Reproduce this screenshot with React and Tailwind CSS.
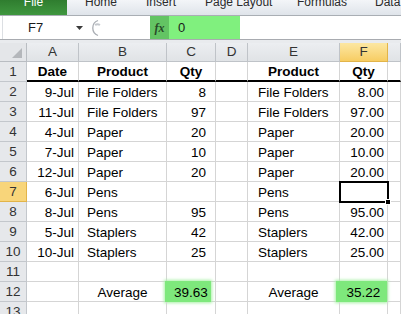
import React from 'react';

const COLS = ['A', 'B', 'C', 'D', 'E', 'F', ''];

// cell alignment per column
const ALIGN = [
    'justify-end pr-[4px]',
    'justify-start pl-[8px]',
    'justify-end pr-[9px]',
    'justify-start',
    'justify-start pl-[10px]',
    'justify-end pr-[3px]',
    'justify-start',
];

const ROWS = [
    ['Date', 'Product', 'Qty', '', 'Product', 'Qty', ''],
    ['9-Jul', 'File Folders', '8', '', 'File Folders', '8.00', ''],
    ['11-Jul', 'File Folders', '97', '', 'File Folders', '97.00', ''],
    ['4-Jul', 'Paper', '20', '', 'Paper', '20.00', ''],
    ['7-Jul', 'Paper', '10', '', 'Paper', '10.00', ''],
    ['12-Jul', 'Paper', '20', '', 'Paper', '20.00', ''],
    ['6-Jul', 'Pens', '', '', 'Pens', '', ''],
    ['8-Jul', 'Pens', '95', '', 'Pens', '95.00', ''],
    ['5-Jul', 'Staplers', '42', '', 'Staplers', '42.00', ''],
    ['10-Jul', 'Staplers', '25', '', 'Staplers', '25.00', ''],
    ['', '', '', '', '', '', ''],
    ['', 'Average', '39.63', '', 'Average', '35.22', ''],
    ['', '', '', '', '', '', ''],
];

function Ribbon() {
    return (
        <div className="h-[16px] flex bg-gradient-to-b from-[#f3f5f8] to-[#dfe4ea] border-b border-[#a9aeb4] overflow-hidden text-[12px] text-[#2b2b2b]">
            <div className="w-[67px] h-full bg-gradient-to-b from-[#2f7d2f] to-[#3f973f] text-white flex justify-center">
                <span className="-mt-[5px] leading-[14px]">File</span>
            </div>
            <div className="w-[18px]" />
            <div className="w-[61px] -mt-[5px] leading-[14px]">Home</div>
            <div className="w-[59px] -mt-[5px] leading-[14px]">Insert</div>
            <div className="w-[92px] -mt-[5px] leading-[14px]">Page Layout</div>
            <div className="w-[78px] -mt-[5px] leading-[14px]">Formulas</div>
            <div className="-mt-[5px] leading-[14px]">Data</div>
        </div>
    );
}

function FormulaBar() {
    return (
        <div className="h-[24px] flex bg-white border-b border-[#a8abb0]">
            <div className="w-[84px] flex items-center border-l border-[#dcdfe3] ml-[2px]">
                <span className="ml-[25px] text-[13px] text-[#1a1a1a]">F7</span>
                <svg width="7" height="4" viewBox="0 0 7 4" className="ml-[33px]">
                    <polygon points="0,0 7,0 3.5,4" fill="#3a3a3a" />
                </svg>
            </div>
            <div className="w-[64px] flex items-center">
                <svg width="16" height="18" viewBox="0 0 16 18">
                    <path d="M12 1.5 A 8 8 0 0 0 12 16.5" fill="none" stroke="#a9adb3" strokeWidth="1.3" />
                    <path d="M9 6 A 4 3 0 0 1 14 6" fill="none" stroke="#c4c8cd" strokeWidth="2" />
                </svg>
            </div>
            <div className="w-[19px] bg-[#63c463] flex items-center justify-center">
                <span className="text-[12px] italic font-bold text-[#284a28]" style={{ fontFamily: '"Liberation Serif", serif' }}>fx</span>
            </div>
            <div className="w-[71px] bg-[#80f07e] flex items-center">
                <span className="ml-[9px] text-[13px] text-[#1a1a1a]">0</span>
            </div>
        </div>
    );
}

function Cell({ r, c, value }) {
    const header = r === 0;
    const avgRow = r === 11;
    let align = ALIGN[c];
    if (header || (avgRow && value)) align = 'justify-center';
    const green = avgRow && (c === 2 || c === 5);
    const selected = r === 6 && c === 5;

    return (
        <div
            className={`relative flex items-center border-r border-b border-[#d5d5d5] ${align} ${header ? 'font-bold border-b-2 border-b-black' : ''}`}
        >
            {green && (
                <div
                    className={`absolute -top-[1px] -bottom-[1px] bg-[#7ee87c] shadow-[0_0_3px_1px_#a8f0a6] ${c === 2 ? '-left-[2px] right-[4px]' : '-left-[4px] right-[0px]'}`}
                />
            )}
            {value && <span className={`relative z-10 ${header ? 'pt-[2px]' : 'pt-[3px]'}`}>{value}</span>}
            {selected && (
                <>
                    <div className="absolute -left-[1px] -top-[1px] w-[50px] h-[22px] border-2 border-black z-20" />
                    <div className="absolute left-[45px] top-[17px] w-[6px] h-[6px] bg-black border border-white z-30" />
                </>
            )}
        </div>
    );
}

function Sheet() {
    return (
        <div className="grid grid-cols-[27px_52px_88px_49px_32px_92px_48px_1fr] grid-rows-[19px_repeat(13,20px)] text-[13.5px] text-black">
            {/* corner */}
            <div className="relative bg-[#e4e6e9] border-r border-b border-[#b9bdc2]">
                <svg width="10" height="10" viewBox="0 0 10 10" className="absolute right-[4px] bottom-[3px]">
                    <polygon points="10,0 10,10 0,10" fill="#b4b7bb" />
                </svg>
            </div>
            {COLS.map((col, i) => (
                <div
                    key={col + i}
                    className={`flex items-center justify-center border-r border-b text-[#333] ${
                        col === 'F'
                            ? 'bg-gradient-to-b from-[#fce7a2] to-[#f7cd62] border-[#e2b449]'
                            : 'bg-gradient-to-b from-[#eceef1] to-[#e0e3e6] border-[#bfc3c8]'
                    }`}
                >
                    <span className="pt-[1px]">{col}</span>
                </div>
            ))}
            {ROWS.map((row, r) => (
                <React.Fragment key={r}>
                    <div
                        className={`flex items-center justify-center border-r border-b text-[#333] ${
                            r === 6
                                ? 'bg-[#f8d57a] border-[#e2b449]'
                                : 'bg-[#e6e8eb] border-[#c3c7cc]'
                        }`}
                    >
                        <span className="pt-[2px]">{r + 1}</span>
                    </div>
                    {row.map((value, c) => (
                        <Cell key={c} r={r} c={c} value={value} />
                    ))}
                </React.Fragment>
            ))}
        </div>
    );
}

export default function App() {
    return (
        <div className="w-[401px] h-[314px] overflow-hidden bg-white" style={{ fontFamily: '"Liberation Sans", Arial, sans-serif' }}>
            <Ribbon />
            <FormulaBar />
            <div className="h-[3px] bg-[#e9ebee]" />
            <Sheet />
        </div>
    );
}
